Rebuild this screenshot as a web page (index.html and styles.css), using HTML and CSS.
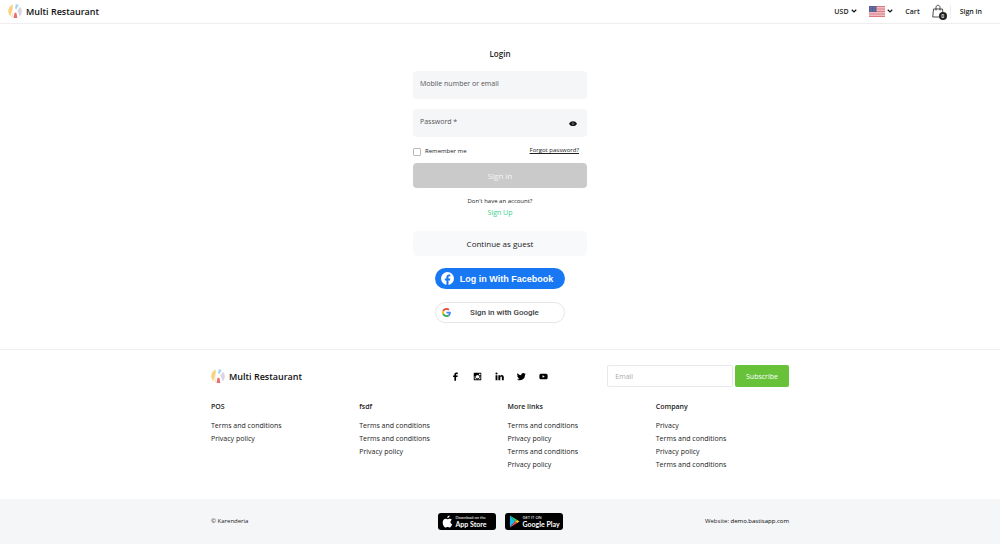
FILE: index.html
```html
<!DOCTYPE html>
<html lang="en">
<head>
  <meta charset="UTF-8" />
  <meta name="viewport" content="width=device-width, initial-scale=1.0"/>
  <title>Login - Multi Restaurant</title>
  <link rel="stylesheet" href="styles.css">
</head>
<body>
  <!-- Shared shapes -->
  <svg class="sprite" aria-hidden="true">
    <symbol id="logo" viewBox="0 0 30 32">
      <path d="M10 2v9L5 27C-2 20-1 7 10 2z" fill="#f8d27c"/>
      <path d="M10 15v15l-3-2z" fill="#fae3b0"/>
      <path d="M15 10l2-9 6 2-5 9z" fill="#a5d4f0"/>
      <path d="M20 15l6-8c5 6 5 15-1 20z" fill="#dad5e6"/>
      <path d="M12 31l2-11h4l2 11z" fill="#e66f72"/>
    </symbol>
    <symbol id="chevron" viewBox="0 0 12 8">
      <path d="M1.500 1.500L6 6l4.500-4.500" fill="none" stroke="#111" stroke-width="2.400"/>
    </symbol>
  </svg>

  <header class="topbar">
    <a href="#" class="brand"><svg class="brand-icon"><use href="#logo"/></svg>Multi Restaurant</a>
    <nav class="top-nav">
      <label class="currency">
        <select class="currency-select" aria-label="Currency">
          <option>USD</option>
        </select>
        <svg class="chevron"><use href="#chevron"/></svg>
      </label>
      <button type="button" class="language" aria-label="Language">
        <svg class="flag" viewBox="0 0 32 22">
          <path fill="#f6e4e6" d="M0 0h32v22H0z"/>
          <path stroke="#d9636e" stroke-width="1.700" d="M0 1h32M0 4.300h32M0 7.700h32M0 11h32M0 14.300h32M0 17.700h32M0 21h32"/>
          <path fill="#5a5e96" d="M0 0h15v12H0z"/>
          <path stroke="#a5a8cc" stroke-dasharray="1 2" d="M2 3h12M2 6h12M2 9h12"/>
        </svg>
        <svg class="chevron"><use href="#chevron"/></svg>
      </button>
      <a href="#" class="cart-link">Cart</a>
      <a href="#" class="bag" aria-label="Shopping bag">
        <svg class="bag-icon" viewBox="0 0 24 26">
          <path d="M3 9h18l1.500 16h-21zM8 12V6c0-6 8-6 8 0v6" fill="none" stroke="#222" stroke-width="1.600"/>
        </svg>
        <span class="bag-count">0</span>
      </a>
      <a href="#" class="signin-link">Sign in</a>
    </nav>
  </header>

  <main class="login">
    <h1>Login</h1>
    <form class="login-form">
      <input type="text" class="field" placeholder="Mobile number or email" aria-label="Mobile number or email">
      <div class="password">
        <input type="password" class="field" placeholder="Password *" aria-label="Password">
        <button type="button" class="show-password" aria-label="Show password">
          <svg viewBox="0 0 24 16"><path d="M0 8c5-10 19-10 24 0-5 10-19 10-24 0z" fill="#111"/><circle cx="12" cy="8" r="3" fill="none" stroke="#f5f6f8" stroke-width="1"/></svg>
        </button>
      </div>
      <div class="options">
        <label class="remember"><input type="checkbox"> Remember me</label>
        <a href="#" class="forgot">Forgot password?</a>
      </div>
      <button type="submit" class="signin-btn" disabled>Sign in</button>
    </form>
    <p class="no-account">Don't have an account?</p>
    <a href="#" class="signup">Sign Up</a>
    <button type="button" class="guest-btn">Continue as guest</button>
    <button type="button" class="social-btn facebook">
      <svg class="social-icon" viewBox="0 0 24 24"><circle cx="12" cy="12" r="12" fill="#fff"/><path d="M10 24v-8.500H7V12h3V9.400c0-3.100 1.900-4.800 4.600-4.800l2.600.2v3h-1.500c-1.500 0-1.900.9-1.900 1.800V12h3.300l-.6 3.500h-2.700V24z" fill="#1877f2"/></svg>
      <span>Log in With Facebook</span>
    </button>
    <button type="button" class="social-btn google">
      <svg class="social-icon" viewBox="0 0 48 48"><path fill="#ea4335" d="M24 9.500c3.540 0 6.710 1.220 9.210 3.600l6.850-6.850C35.900 2.380 30.470 0 24 0 14.620 0 6.510 5.380 2.560 13.220l7.980 6.190C12.430 13.720 17.740 9.500 24 9.500z"/><path fill="#4285f4" d="M46.980 24.550c0-1.570-.15-3.090-.38-4.550H24v9.020h12.940c-.58 2.960-2.260 5.480-4.780 7.180l7.730 6c4.510-4.180 7.090-10.360 7.090-17.650z"/><path fill="#fbbc05" d="M10.530 28.590c-.48-1.450-.76-2.990-.76-4.590s.27-3.140.76-4.590l-7.980-6.190C.92 16.460 0 20.120 0 24c0 3.880.92 7.540 2.560 10.780l7.970-6.190z"/><path fill="#34a853" d="M24 48c6.480 0 11.930-2.130 15.890-5.810l-7.730-6c-2.150 1.450-4.920 2.300-8.160 2.300-6.260 0-11.570-4.220-13.470-9.910l-7.980 6.190C6.510 42.620 14.620 48 24 48z"/></svg>
      <span>Sign in with Google</span>
    </button>
  </main>

  <footer>
    <div class="container footer-main">
      <div class="footer-top">
        <a href="#" class="brand"><svg class="brand-icon"><use href="#logo"/></svg>Multi Restaurant</a>
        <div class="socials">
          <a href="#" aria-label="Facebook"><svg viewBox="0 0 24 24"><path d="M9 23V13H5.500V9H9V6.500C9 3 11 1 14.500 1H18v4h-2.500C14 5 13.500 5.600 13.500 7v2H18l-.6 4h-3.900v10z"/></svg></a>
          <a href="#" aria-label="Instagram"><svg viewBox="0 0 24 24"><path fill-rule="evenodd" d="M2 2h20v20H2zM16 4.500v4h4v-4zM4.500 11v8.500h15V11h-2a6 6 0 1 1-11 0zM12 8a4.500 4.500 0 1 0 0 9 4.500 4.500 0 0 0 0-9z"/></svg></a>
          <a href="#" aria-label="LinkedIn"><svg viewBox="0 0 24 24"><circle cx="4" cy="4" r="2.800"/><path d="M1.500 8.500h5V22h-5zM9 8.500h4.600v2c2-3.600 9.800-3.600 9.800 3.500v8h-5v-7c0-4-4.400-4-4.400 0v7H9z"/></svg></a>
          <a href="#" aria-label="Twitter"><svg viewBox="0 0 24 24"><path d="M23.600 4.900a10 10 0 0 1-2.800.8 4.900 4.900 0 0 0 2.100-2.700 10 10 0 0 1-3.100 1.200 4.900 4.900 0 0 0-8.400 4.500A14 14 0 0 1 1.300 3.500a4.900 4.900 0 0 0 1.500 6.600 5 5 0 0 1-2.200-.6 4.900 4.900 0 0 0 3.900 4.900 5 5 0 0 1-2.200.1 4.900 4.900 0 0 0 4.600 3.400A10 10 0 0 1 0 20a14 14 0 0 0 21.400-12.600 10 10 0 0 0 2.200-2.500z"/></svg></a>
          <a href="#" aria-label="YouTube"><svg viewBox="0 0 24 24"><path fill-rule="evenodd" d="M5 4.500h14a4 4 0 0 1 4 4v7a4 4 0 0 1-4 4H5a4 4 0 0 1-4-4v-7a4 4 0 0 1 4-4zM9.500 8.500v7l6-3.500z"/></svg></a>
        </div>
        <form class="subscribe">
          <input type="email" placeholder="Email" aria-label="Email">
          <button type="submit">Subscribe</button>
        </form>
      </div>
      <div class="footer-links">
        <div>
          <h2>POS</h2>
          <ul>
            <li><a href="#">Terms and conditions</a></li>
            <li><a href="#">Privacy policy</a></li>
          </ul>
        </div>
        <div>
          <h2>fsdf</h2>
          <ul>
            <li><a href="#">Terms and conditions</a></li>
            <li><a href="#">Terms and conditions</a></li>
            <li><a href="#">Privacy policy</a></li>
          </ul>
        </div>
        <div>
          <h2>More links</h2>
          <ul>
            <li><a href="#">Terms and conditions</a></li>
            <li><a href="#">Privacy policy</a></li>
            <li><a href="#">Terms and conditions</a></li>
            <li><a href="#">Privacy policy</a></li>
          </ul>
        </div>
        <div>
          <h2>Company</h2>
          <ul>
            <li><a href="#">Privacy</a></li>
            <li><a href="#">Terms and conditions</a></li>
            <li><a href="#">Privacy policy</a></li>
            <li><a href="#">Terms and conditions</a></li>
          </ul>
        </div>
      </div>
    </div>
    <div class="footer-bottom">
      <div class="container bottom-row">
        <span>© Karenderia</span>
        <div class="stores">
          <a href="#" class="store">
            <svg class="store-icon" viewBox="0 0 24 28"><path fill="#fff" d="M16.500 1c.2 3-2.200 5.600-5 5.500C11.300 3.700 13.600 1.200 16.500 1zM21.500 10c-4.500 2.800-3.600 8.500.8 10.200C21 24 18.800 27 16.700 27c-1.700 0-2.400-1-4.400-1s-2.800 1-4.400 1C4.600 27 1.500 20.800 1.500 16c0-5 3-8 6.500-8 1.800 0 3.200 1.200 4.300 1.200C13.300 9.200 15 7.900 17 7.900c1.900 0 3.500.8 4.500 2.100z"/></svg>
            <span class="store-text"><small>Download on the</small><b>App Store</b></span>
          </a>
          <a href="#" class="store">
            <svg class="store-icon" viewBox="0 0 24 28"><path fill="#18b9f0" d="M2 1v26l11-13z"/><path fill="#2fd07b" d="M2 1l16 9.500-5 3.500z"/><path fill="#f04a4f" d="M2 27l16-9.500-5-3.500z"/><path fill="#fcc51c" d="M18 10.500l5 3.500-5 3.500-5-3.500z"/></svg>
            <span class="store-text"><small>GET IT ON</small><b>Google Play</b></span>
          </a>
        </div>
        <span class="website">Website: <a href="#">demo.bastisapp.com</a></span>
      </div>
    </div>
  </footer>
</body>
</html>
```
FILE: styles.css
```css
* {
  box-sizing: border-box;
}

body {
  margin: 0;
  font-family: 'Open Sans', sans-serif;
  font-size: 7px;
  line-height: 13px;
  color: #222;
  background: #fff;
}

h1, h2, p, ul {
  margin: 0;
  padding: 0;
}

a {
  color: inherit;
  text-decoration: none;
}

button, input, select {
  font-family: inherit;
  margin: 0;
  padding: 0;
  border: none;
}

button {
  cursor: pointer;
}

svg {
  display: block;
  flex-shrink: 0;
}

.sprite {
  position: absolute;
  width: 0;
  height: 0;
}

.brand {
  display: flex;
  align-items: center;
  gap: 4px;
  font-size: 9px;
  font-weight: 600;
  color: #111;
}

.brand-icon {
  width: 14px;
  height: 16px;
}

/* Header */
.topbar {
  display: flex;
  justify-content: space-between;
  align-items: center;
  height: 24px;
  padding: 0 18px 1px 8px;
  border-bottom: 1px solid #eee;
}

.top-nav {
  display: flex;
  align-items: center;
  font-weight: 600;
}

.currency, .language {
  display: flex;
  align-items: center;
  gap: 2px;
  margin-right: 12px;
  background: none;
}

.currency-select {
  appearance: none;
  background: none;
  font-size: 7px;
  font-weight: 600;
  color: #222;
}

.chevron {
  width: 6px;
  height: 4px;
}

.flag {
  width: 16px;
  height: 11px;
}

.bag {
  position: relative;
  margin: 0 6px 0 12px;
}

.bag-icon {
  width: 12px;
  height: 14px;
}

.bag-count {
  position: absolute;
  right: -3px;
  bottom: -2px;
  width: 8px;
  height: 8px;
  border-radius: 50%;
  background: #222;
  color: #fff;
  font-size: 5px;
  line-height: 8px;
  text-align: center;
}

.signin-link {
  padding-left: 9px;
  border-left: 1px solid #eee;
}

/* Login */
.login {
  display: flex;
  flex-direction: column;
  align-items: center;
  max-width: 174px;
  margin: 0 auto;
  padding: 23px 0 26px;
}

.login h1 {
  margin-bottom: 11px;
  font-size: 8px;
  line-height: 13px;
  font-weight: 600;
}

.login-form {
  width: 100%;
}

.field {
  display: block;
  width: 100%;
  height: 28px;
  padding: 0 7px 4px;
  border-radius: 4px;
  background: #f5f6f8;
  font-size: 7px;
}

.field::placeholder {
  color: #555;
}

.password {
  position: relative;
  margin: 10px 0 8px;
}

.show-password {
  position: absolute;
  right: 10px;
  top: 12px;
  width: 8px;
  background: none;
}

.options {
  display: flex;
  justify-content: space-between;
  padding-right: 8px;
  margin-bottom: 5px;
  font-size: 6px;
}

.remember {
  display: flex;
  align-items: center;
  gap: 4px;
}

.remember input {
  appearance: none;
  width: 8px;
  height: 8px;
  border: 1px solid #bbb;
  border-radius: 1px;
}

.forgot {
  line-height: 10px;
  text-decoration: underline;
}

.signin-btn, .guest-btn {
  width: 100%;
  height: 25px;
  border-radius: 4px;
  font-size: 8px;
}

.signin-btn {
  background: #cacaca;
  color: #f5f5f5;
}

.no-account {
  margin-top: 8px;
  font-size: 6px;
  line-height: 11px;
}

.signup {
  margin-bottom: 13px;
  font-size: 7px;
  line-height: 11px;
  color: #3ecf8e;
}

.guest-btn {
  margin-bottom: 12px;
  background: #f8f9fa;
  color: #222;
}

.social-btn {
  display: flex;
  align-items: center;
  width: 130px;
  height: 21px;
  padding: 0 6px;
  border-radius: 11px;
}

.social-btn span {
  flex: 1;
}

.facebook {
  margin-bottom: 13px;
  background: #1877f2;
  color: #fff;
  font-family: 'Liberation Sans', Arial, sans-serif;
  font-size: 9px;
  font-weight: 700;
}

.facebook .social-icon {
  width: 13px;
  height: 13px;
}

.google {
  border: 1px solid #e4e6e8;
  background: #fff;
  color: #3c4043;
  font-family: Roboto, sans-serif;
  font-size: 8px;
  font-weight: 500;
}

.google .social-icon {
  width: 9px;
  height: 9px;
}

/* Footer */
footer {
  border-top: 1px solid #eee;
}

.container {
  width: 58%;
  max-width: 1200px;
  margin: 0 auto;
  padding: 0 1px;
}

.footer-main {
  padding-top: 15px;
  padding-bottom: 28px;
}

.footer-top {
  display: grid;
  grid-template-columns: 1fr 1fr 1fr;
  align-items: center;
  margin-bottom: 13px;
}

.socials {
  display: flex;
  justify-content: center;
  gap: 13px;
}

.socials svg {
  width: 9px;
  height: 9px;
}

.subscribe {
  display: flex;
  gap: 2px;
  margin-left: 11px;
}

.subscribe input {
  flex: 1;
  min-width: 0;
  height: 22px;
  padding: 0 7px;
  border: 1px solid #e8e8e8;
  border-radius: 2px;
  font-size: 7px;
}

.subscribe input::placeholder {
  color: #aaa;
}

.subscribe button {
  width: 54px;
  border-radius: 2px;
  background: #67c23a;
  color: #fff;
  font-size: 7px;
}

.footer-links {
  display: grid;
  grid-template-columns: repeat(4, 1fr);
  gap: 15px;
}

.footer-links h2 {
  margin-bottom: 6px;
  font-size: 7px;
  font-weight: 600;
}

.footer-links ul {
  list-style: none;
}

.footer-bottom {
  padding: 14px 0;
  background: #f5f6f8;
  font-size: 6px;
}

.bottom-row {
  display: grid;
  grid-template-columns: 1fr auto 1fr;
  align-items: center;
}

.website {
  text-align: right;
}

.website a {
  font-weight: 500;
  color: #000;
}

.stores {
  display: flex;
  gap: 9px;
}

.store {
  display: flex;
  align-items: center;
  gap: 3px;
  width: 58px;
  height: 17px;
  padding: 0 4px;
  border-radius: 3px;
  background: #000;
  color: #fff;
}

.store-icon {
  width: 11px;
  height: 13px;
}

.store-text {
  display: flex;
  flex-direction: column;
  font-family: Lato, sans-serif;
  white-space: nowrap;
}

.store-text small {
  font-size: 4px;
  line-height: 5px;
}

.store-text b {
  font-size: 7px;
  line-height: 9px;
  font-weight: 700;
}
```
